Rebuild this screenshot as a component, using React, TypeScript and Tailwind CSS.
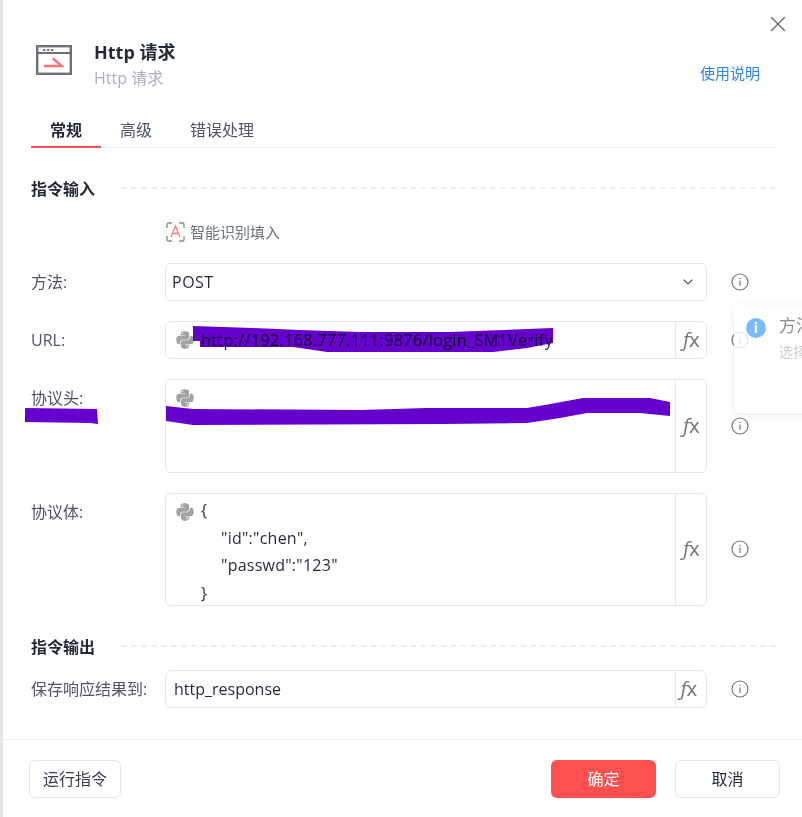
import { X, ChevronDown } from "lucide-react";
import { FaPython } from "react-icons/fa";
import type { ReactNode } from "react";

const FONT = '"Open Sans", "Noto Sans CJK SC", sans-serif';

function Info() {
  return (
    <svg width="18" height="18" viewBox="0 0 18 18" fill="none" className="shrink-0 text-[#75757d]">
      <circle cx="9" cy="9" r="8" stroke="currentColor" strokeWidth="1.2" />
      <rect x="8.4" y="7.6" width="1.2" height="5.4" fill="currentColor" />
      <rect x="8.4" y="4.8" width="1.2" height="1.4" fill="currentColor" />
    </svg>
  );
}

function Fx({ shift = false }: { shift?: boolean }) {
  return (
    <div className={`w-[31px] shrink-0 self-stretch border-l border-[#e5e7eb] flex items-center justify-center ${shift ? "pr-[5px]" : ""}`}>
      <span className="text-[19px] leading-none text-[#7a7a80] tracking-[-1px]" style={{ fontFamily: '"DejaVu Sans", sans-serif' }}><i>ƒ</i>x</span>
    </div>
  );
}

function Py() {
  return <FaPython className="shrink-0 text-[#a3a3a3]" size={20} />;
}

function Row({ label, children, h, infoTop }: { label: string; children: ReactNode; h: string; infoTop?: string }) {
  return (
    <div className="flex items-start">
      <div className="w-[134px] shrink-0 text-[16px] leading-[38px] text-[#4b5563]">{label}</div>
      <div className={`w-[542px] ${h} shrink-0 rounded-[6px] border border-[#e5e7eb] bg-white flex overflow-hidden`}>{children}</div>
      <div className={`ml-[24px] ${infoTop ?? "mt-[10px]"}`}><Info /></div>
    </div>
  );
}

function Section({ title, className }: { title: string; className: string }) {
  return (
    <div className={`flex items-center h-[22px] ${className}`}>
      <div className="w-[90px] shrink-0 text-[16px] font-bold text-[#1f2937] leading-[22px]">{title}</div>
      <div className="flex-1 border-t-2 border-dashed border-[#eeeef0] -mt-[2px]" />
    </div>
  );
}

export default function App() {
  return (
    <div className="relative w-[802px] h-[817px] overflow-hidden bg-white flex" style={{ fontFamily: FONT }}>
      <div className="w-[3px] shrink-0 bg-[#e6e6e6]" />
      <div className="flex-1 flex flex-col">
        <div className="pl-[28px] pr-[26px]">
          <div className="flex pt-[40px] items-start">
            <svg width="37" height="32" viewBox="0 0 37 32" fill="none" className="ml-[5px] mt-[4px] shrink-0">
              <rect x="1.200" y="2.200" width="33.600" height="27.600" stroke="#6f6f78" strokeWidth="2.400" />
              <line x1="1" y1="9" x2="35" y2="9" stroke="#6f6f78" strokeWidth="2" />
              <rect x="7" y="5" width="2.400" height="2" fill="#6f6f78" />
              <rect x="11" y="5" width="2.400" height="2" fill="#6f6f78" />
              <rect x="15" y="5" width="2.400" height="2" fill="#6f6f78" />
              <path d="M8 22H25.500L17 14.500" stroke="#ff6f73" strokeWidth="2.400" />
            </svg>
            <div className="ml-[21px]">
              <div className="text-[18px] font-bold leading-[24px] text-[#1f2937]">Http 请求</div>
              <div className="text-[16px] leading-[24px] mt-[2px] text-[#a8b0c6]">Http 请求</div>
            </div>
            <div className="ml-auto mr-[16px] mt-[21px] text-[15px] leading-[24px] text-[#2d84f0]">使用说明</div>
          </div>
          <div className="flex mt-[23px] h-[35px] border-b border-[#eeeeee] text-[16px] leading-[34px]">
            <div className="w-[70px] text-center font-semibold text-[#1f2937] h-[35px] border-b-2 border-[#ff5050]">常规</div>
            <div className="ml-[19px] text-[#4b5563]">高级</div>
            <div className="ml-[38px] text-[#4b5563]">错误处理</div>
          </div>

          <Section title="指令输入" className="mt-[30px]" />
          <div className="mt-[22px] ml-[134px] h-[20px] flex items-center">
            <svg width="19" height="20" viewBox="0 0 19 20" fill="none" className="ml-[1px]">
              <path d="M1 6V2.500Q1 1 2.500 1H6M13 1H16.500Q18 1 18 2.500V6M18 14V17.500Q18 19 16.500 19H13M6 19H2.500Q1 19 1 17.500V14" stroke="#8f8f8f" strokeWidth="1.400" />
              <path d="M5 15L9.500 4L14 15M6.500 11.500H12.500" stroke="#ff7b80" strokeWidth="1.400" />
            </svg>
            <span className="ml-[5px] text-[15px] text-[#6b7280]">智能识别填入</span>
          </div>

          <div className="mt-[21px] flex flex-col gap-[20px]">
            <Row label="方法:" h="h-[38px]">
              <div className="flex-1 flex items-center pl-[6px] pr-[10px] text-[16px] text-[#1f2937]">
                <span className="tracking-[0.5px]">POST</span>
                <ChevronDown size={16} strokeWidth={1.600} className="ml-auto text-[#4b5563]" />
              </div>
            </Row>
            <Row label="URL:" h="h-[38px]">
              <div className="flex-1 flex items-center pl-[9px] text-[16px] text-[#1f2937] whitespace-nowrap">
                <Py />
                <span className="ml-[6px] tracking-[0.42px]">http://192.168.777.111:9876/login_SM1Verify</span>
              </div>
              <Fx />
            </Row>
            <Row label="协议头:" h="h-[94px]" infoTop="mt-[38px]">
              <div className="flex-1 pl-[9px] pt-[8px]"><Py /></div>
              <Fx />
            </Row>
            <Row label="协议体:" h="h-[113px]" infoTop="mt-[47px]">
              <div className="flex-1 pl-[9px] pt-[3px] flex items-start text-[16px] text-[#1f2937] leading-[27.7px]">
                <div className="mt-[5px]"><Py /></div>
                <div className="ml-[6px] whitespace-pre tracking-[0.25px]">
                  <div>{"{"}</div>
                  <div className="pl-[20px]">{'"id":"chen",'}</div>
                  <div className="pl-[20px]">{'"passwd":"123"'}</div>
                  <div>{"}"}</div>
                </div>
              </div>
              <Fx />
            </Row>
          </div>

          <Section title="指令输出" className="mt-[30px]" />
          <div className="mt-[12px]">
            <Row label="保存响应结果到:" h="h-[38px]">
              <div className="flex-1 flex items-center pl-[8px] text-[16px] text-[#1f2937]">http_response</div>
              <Fx shift />
            </Row>
          </div>
        </div>

        <div className="mt-[31px] border-t border-[#eeeeee] pt-[20px] pl-[26px] pr-[22px] flex text-[16px]">
          <button className="w-[92px] h-[38px] rounded-[6px] border border-[#e5e7eb] text-[#374151]">运行指令</button>
          <button className="ml-auto w-[105px] h-[38px] rounded-[6px] bg-[#ff5050] text-white">确定</button>
          <button className="ml-[19px] w-[105px] h-[38px] rounded-[6px] border border-[#e5e7eb] text-[#1f2937]">取消</button>
        </div>
      </div>

      <button className="absolute left-[765px] top-[11px] text-[#6b6b6b]"><X size={26} strokeWidth={1.300} /></button>

      {/* notification over the page */}
      <div className="absolute left-[734px] top-[305px] w-[300px] h-[108px] rounded-[6px] bg-white/80 shadow-[0_2px_10px_rgba(0,0,0,0.08)]">
        <div className="absolute left-[12px] top-[13px] w-[20px] h-[20px] rounded-full bg-[#78bdff] flex items-center justify-center text-white text-[14px] font-bold leading-none">i</div>
        <div className="absolute left-[45px] top-[8px] text-[17px] leading-[26px] text-[#8c8c8c] whitespace-nowrap">方法</div>
        <div className="absolute left-[45px] top-[37px] text-[14px] leading-[20px] text-[#cfcfcf] whitespace-nowrap">选择请求方法</div>
      </div>

      {/* hand-drawn redaction strokes */}
      <svg width="802" height="817" className="absolute left-0 top-0 mix-blend-multiply pointer-events-none">
        <path fill="#6600cc" d="M193 326L253 328L300 330L360 332L450 332L527 329L553 328L553 343L527 348L493 352L360 352L327 352L293 347L200 347L200 341L193 341Z" />
        <path fill="#6600cc" d="M166 406L193 409L360 410L427 408L527 408L545 405L583 398L650 398L670 402L670 416L640 413L587 413L560 418L527 423L443 424L193 425L166 421Z" />
        <path fill="#6600cc" d="M25 408L97 409L98 424L90 423L25 422Z" />
      </svg>
    </div>
  );
}
